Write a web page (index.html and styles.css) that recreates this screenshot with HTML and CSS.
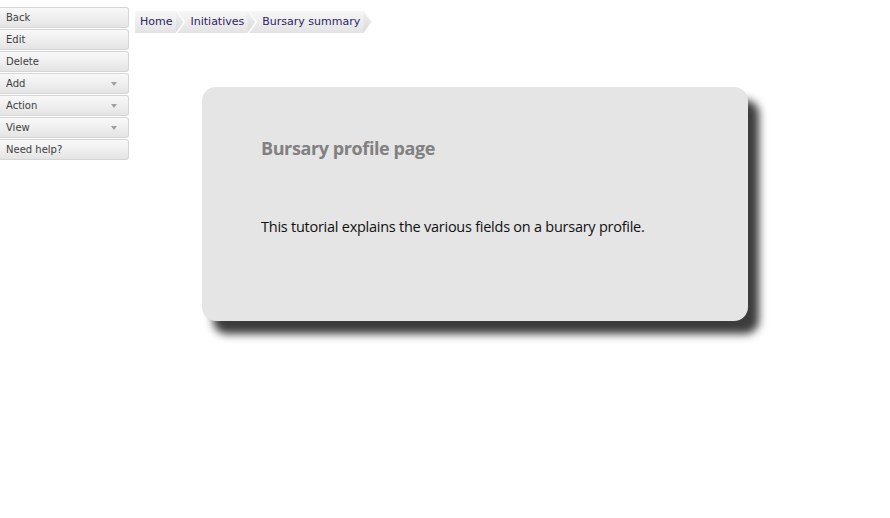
FILE: index.html
```html
<!DOCTYPE html>
<html>
<head>
<meta charset="utf-8">
<link rel="stylesheet" href="styles.css">
</head>
<body>
<div class="page">
  <nav class="menu">
    <div class="btn">Back</div>
    <div class="btn">Edit</div>
    <div class="btn">Delete</div>
    <div class="btn">Add<span class="caret"></span></div>
    <div class="btn">Action<span class="caret"></span></div>
    <div class="btn">View<span class="caret"></span></div>
    <div class="btn">Need help?</div>
  </nav>
  <main class="main">
    <div class="crumbs">
      <span class="crumb">Home</span>
      <span class="crumb">Initiatives</span>
      <span class="crumb">Bursary summary</span>
    </div>
    <section class="card">
      <h1 class="title">Bursary profile page</h1>
      <p class="text">This tutorial explains the various fields on a bursary profile.</p>
    </section>
  </main>
</div>
</body>
</html>
```
FILE: styles.css
```css
html, body { margin: 0; padding: 0; background: #fff; }
.page { display: flex; align-items: flex-start; font-family: "DejaVu Sans", Verdana, sans-serif; min-height: 518px; }
.menu { display: flex; flex-direction: column; padding-top: 7px; width: 129px; }
.btn {
  position: relative;
  height: 19px;
  line-height: 19px;
  margin-bottom: 1px;
  padding-left: 6px;
  font-size: 10px;
  color: #404040;
  border: 1px solid #d6d6d6;
  border-left: none;
  border-radius: 0 3px 3px 0;
  background: linear-gradient(#f8f8f8, #eeeeee 55%, #e4e4e4);
}
.caret {
  position: absolute;
  right: 11px; top: 8px;
  width: 0; height: 0;
  border-left: 3.5px solid transparent;
  border-right: 3.5px solid transparent;
  border-top: 4px solid #a0a0a0;
}
.main { padding-left: 6px; flex: 1; padding-bottom: 40px; }
.crumbs { display: flex; margin-top: 11px; height: 22px; }
.crumb {
  position: relative;
  height: 22px; line-height: 22px;
  font-size: 11px;
  color: #2d2466;
  padding: 0 3px 0 15px;
  background: linear-gradient(#f7f7f7, #e3e3e3);
}
.crumb:first-child { padding-left: 5px; }
.crumb::before {
  content: "";
  position: absolute;
  right: -10px; top: 0;
  width: 10px; height: 22px;
  background: #fbfbfb;
  clip-path: polygon(0 0, 2px 0, 10px 50%, 2px 100%, 0 100%);
  z-index: 1;
}
.crumb::after {
  content: "";
  position: absolute;
  right: -8px; top: 0;
  width: 8px; height: 22px;
  background: linear-gradient(#f2f2f2, #d8d8d8);
  clip-path: polygon(0 0, 0 0, 8px 50%, 0 100%, 0 100%);
  z-index: 2;
}
.card {
  margin: 54px 0 0 67px;
  width: 546px;
  height: 234px;
  box-sizing: border-box;
  padding: 0 0 0 59px;
  background: #e5e5e5;
  border-radius: 14px;
  box-shadow: 11px 13px 8px 0 #3c3c3c;
  font-family: "Open Sans", Lato, sans-serif;
}
.title {
  margin: 0; padding-top: 49px;
  font-size: 18px; font-weight: 700;
  color: #818181;
  letter-spacing: -0.4px;
}
.text {
  margin: 57px 0 0;
  font-size: 14.5px;
  color: #111;
  letter-spacing: -0.25px;
}
```
